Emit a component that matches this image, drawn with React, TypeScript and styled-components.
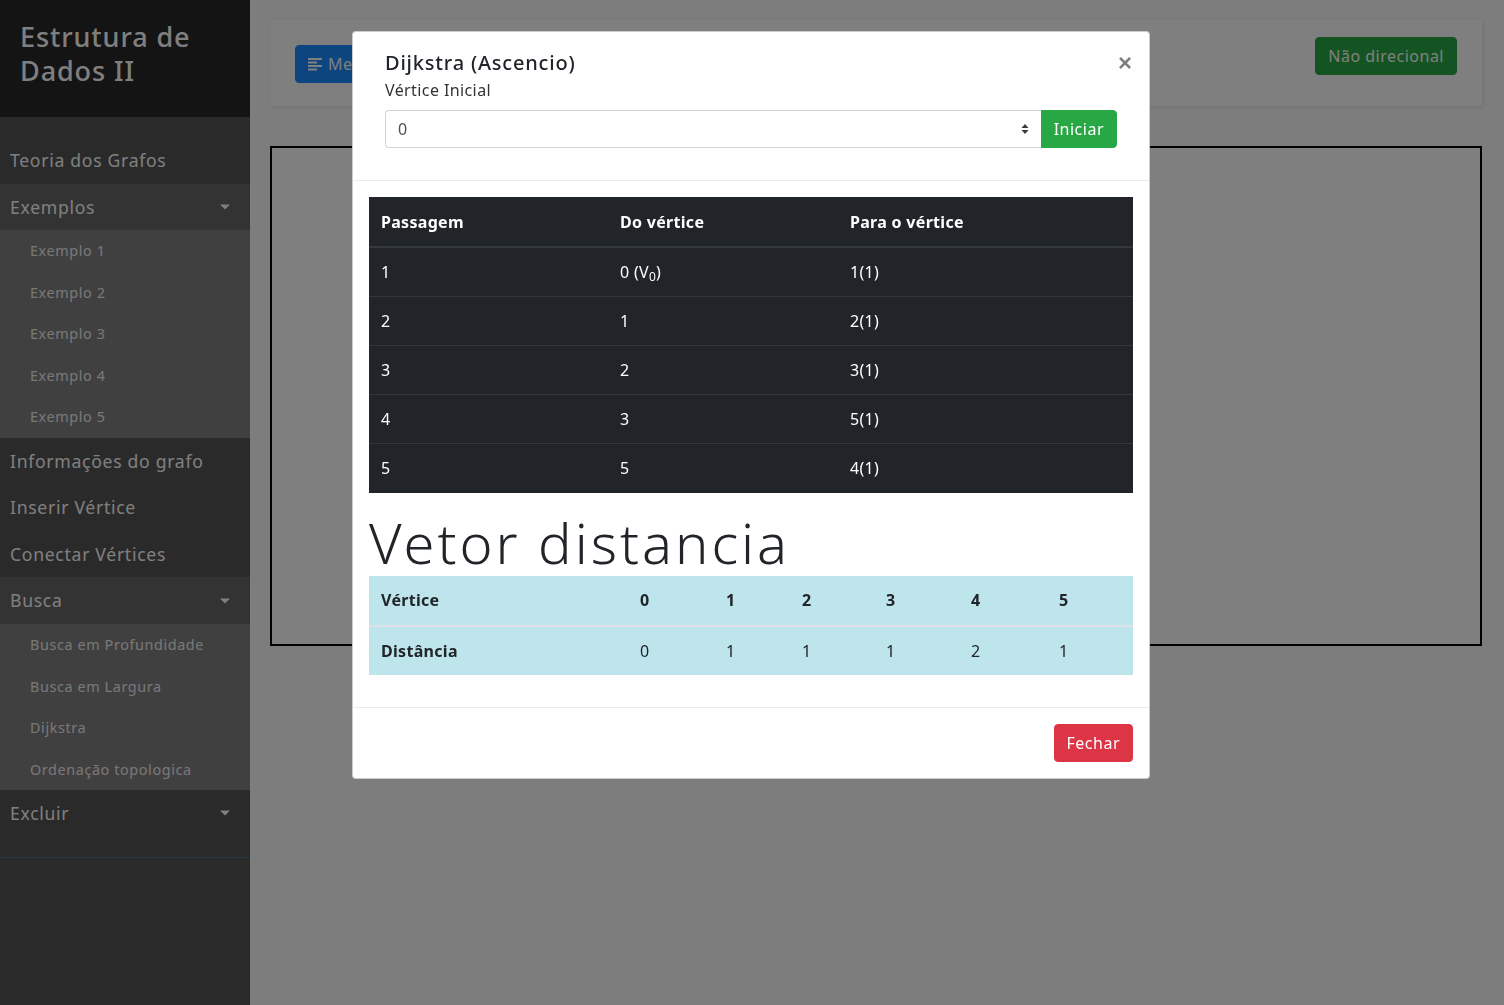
import React from 'react';
import styled, { createGlobalStyle } from 'styled-components';

const FONT = `'Noto Sans', 'Open Sans', sans-serif`;

const GlobalStyle = createGlobalStyle`
  * { box-sizing: border-box; }
  html, body { margin: 0; padding: 0; }
  body {
    font-family: ${FONT};
    background: #fafafa;
    color: #212529;
    overflow: hidden;
  }
`;

const Wrapper = styled.div`
  display: flex;
  min-height: 1005px;
  width: 1504px;
`;

const Sidebar = styled.nav`
  width: 250px;
  flex-shrink: 0;
  background: #545454;
  color: #fff;
`;

const SidebarHeader = styled.div`
  padding: 20px;
  height: 117px;
  background: #282828;
`;

const Brand = styled.h3`
  margin: 0;
  font-size: 27px;
  font-weight: 500;
  line-height: 34px;
  letter-spacing: 0.9px;
`;

const Components = styled.ul`
  list-style: none;
  margin: 0;
  padding: 20px 0;
  border-bottom: 1px solid #47748b;
`;

const NavLink = styled.a<{ $open?: boolean }>`
  position: relative;
  display: block;
  padding: 10px;
  font-size: 17.6px;
  line-height: 26.6px;
  letter-spacing: 0.7px;
  color: #fff;
  background: ${(p) => (p.$open ? '#666666' : 'transparent')};
  text-decoration: none;
`;

const Caret = styled.span`
  position: absolute;
  right: 20px;
  top: 50%;
  transform: translateY(-50%);
  width: 0;
  height: 0;
  border-top: 5px solid #fff;
  border-left: 5px solid transparent;
  border-right: 5px solid transparent;
`;

const SubMenu = styled.ul`
  list-style: none;
  margin: 0;
  padding: 0;
  background: #808080;
`;

const SubLink = styled.a`
  display: block;
  padding: 10px 10px 10px 30px;
  font-size: 14.4px;
  line-height: 21.5px;
  letter-spacing: 0.6px;
  color: #f0f0f0;
  text-decoration: none;
`;

const Content = styled.main`
  flex: 1;
  padding: 20px 22px 20px 20px;
`;

const TopBar = styled.div`
  display: flex;
  justify-content: space-between;
  align-items: flex-start;
  height: 86px;
  padding: 15px 25px;
  background: #fff;
  box-shadow: 1px 1px 3px rgba(0, 0, 0, 0.1);
  margin-bottom: 40px;
`;

const Button = styled.button<{ $bg: string; $offset?: number }>`
  display: inline-flex;
  align-items: center;
  gap: 6px;
  height: 38px;
  padding: 0 12px;
  margin-top: ${(p) => p.$offset ?? 0}px;
  border: 1px solid ${(p) => p.$bg};
  border-radius: 4px;
  background: ${(p) => p.$bg};
  color: #fff;
  font-family: ${FONT};
  font-size: 16px;
  letter-spacing: 0.5px;
  cursor: pointer;
`;

const GraphBox = styled.div`
  height: 500px;
  border: 2px solid #000;
  background: #fff;
`;

const Backdrop = styled.div`
  position: fixed;
  inset: 0;
  background: rgba(0, 0, 0, 0.5);
`;

const Modal = styled.div`
  position: fixed;
  top: 31px;
  left: 352px;
  width: 798px;
  background: #fff;
  border: 1px solid rgba(0, 0, 0, 0.2);
  border-radius: 4px;
`;

const ModalHeader = styled.div`
  display: flex;
  align-items: flex-start;
  padding: 16px 16px 32px 32px;
  border-bottom: 1px solid #e9ecef;
`;

const HeaderMain = styled.div`
  flex: 1;
`;

const Title = styled.h5`
  margin: 0;
  font-size: 20px;
  font-weight: 500;
  line-height: 30px;
  letter-spacing: 0.8px;
`;

const Label = styled.label`
  display: block;
  font-size: 16px;
  line-height: 24px;
  letter-spacing: 0.4px;
  margin-bottom: 8px;
  color: #333;
`;

const InputGroup = styled.div`
  display: flex;
  height: 38px;
`;

const Select = styled.div`
  flex: 1;
  display: flex;
  align-items: center;
  justify-content: space-between;
  padding: 0 12px;
  border: 1px solid #ced4da;
  border-right: none;
  border-radius: 4px 0 0 4px;
  font-size: 16px;
  color: #495057;
`;

const AddonButton = styled(Button)`
  border-radius: 0 4px 4px 0;
  padding: 0 12px;
`;

const Close = styled.button`
  width: 16px;
  margin-top: 4px;
  padding: 0;
  border: none;
  background: none;
  color: #000;
  opacity: 0.5;
  font-size: 24px;
  font-weight: 700;
  line-height: 22px;
  cursor: pointer;
`;

const ModalBody = styled.div`
  padding: 16px;
`;

const Table = styled.table<{ $dark?: boolean }>`
  width: 100%;
  border-collapse: collapse;
  table-layout: fixed;
  margin-bottom: ${(p) => (p.$dark ? 0 : 16)}px;
  background: ${(p) => (p.$dark ? '#212529' : '#bee5eb')};
  color: ${(p) => (p.$dark ? '#fff' : '#212529')};
  font-size: 16px;
  letter-spacing: 0.3px;

  th, td {
    padding: 12px;
    text-align: left;
    line-height: 24px;
    height: 49px;
  }
  th { font-weight: 700; }
  thead th {
    height: 50px;
    border-bottom: 2px solid ${(p) => (p.$dark ? '#32383e' : '#dee2e6')};
  }
  tbody tr + tr td {
    border-top: 1px solid ${(p) => (p.$dark ? '#32383e' : '#dee2e6')};
  }
`;

const Cell = styled.td<{ $bold?: boolean }>`
  font-weight: ${(p) => (p.$bold ? 700 : 400)};
`;

const Sub = styled.sub`
  font-size: 12px;
  line-height: 0;
  vertical-align: -3px;
`;

const Display = styled.h1`
  margin: 16px 0 0;
  font-size: 56px;
  font-weight: 300;
  line-height: 67px;
  letter-spacing: 3px;
  color: #212529;
`;

const ModalFooter = styled.div`
  display: flex;
  justify-content: flex-end;
  padding: 16px;
  border-top: 1px solid #e9ecef;
`;

const MenuIcon = () => (
  <svg width="14" height="14" viewBox="0 0 14 14" fill="#fff">
    <rect x="0" y="1" width="14" height="2" />
    <rect x="0" y="4.5" width="9" height="2" />
    <rect x="0" y="8" width="14" height="2" />
    <rect x="0" y="11.5" width="9" height="2" />
  </svg>
);

const SelectArrows = () => (
  <svg width="8" height="12" viewBox="0 0 8 12" fill="#343a40">
    <path d="M4 1 L7.5 5 H0.5 Z" />
    <path d="M4 11 L7.5 7 H0.5 Z" />
  </svg>
);

const steps = [
  ['1', <>0 (V<Sub>0</Sub>)</>, '1(1)'],
  ['2', '1', '2(1)'],
  ['3', '2', '3(1)'],
  ['4', '3', '5(1)'],
  ['5', '5', '4(1)'],
];

const distances = [0, 1, 1, 1, 2, 1];
const distWidths = [86, 76, 84, 85, 88, 86];

export default function App() {
  return (
    <>
      <GlobalStyle />
      <Wrapper>
        <Sidebar>
          <SidebarHeader>
            <Brand>Estrutura de Dados II</Brand>
          </SidebarHeader>
          <Components>
            <li><NavLink>Teoria dos Grafos</NavLink></li>
            <li>
              <NavLink $open>Exemplos<Caret /></NavLink>
              <SubMenu>
                {[1, 2, 3, 4, 5].map((n) => (
                  <li key={n}><SubLink>Exemplo {n}</SubLink></li>
                ))}
              </SubMenu>
            </li>
            <li><NavLink>Informações do grafo</NavLink></li>
            <li><NavLink>Inserir Vértice</NavLink></li>
            <li><NavLink>Conectar Vértices</NavLink></li>
            <li>
              <NavLink $open>Busca<Caret /></NavLink>
              <SubMenu>
                {['Busca em Profundidade', 'Busca em Largura', 'Dijkstra', 'Ordenação topologica'].map((s) => (
                  <li key={s}><SubLink>{s}</SubLink></li>
                ))}
              </SubMenu>
            </li>
            <li><NavLink>Excluir<Caret /></NavLink></li>
          </Components>
        </Sidebar>
        <Content>
          <TopBar>
            <Button $bg="#1a8cff" $offset={10}><MenuIcon />Menu</Button>
            <Button $bg="#28a745" $offset={2}>Não direcional</Button>
          </TopBar>
          <GraphBox />
        </Content>
      </Wrapper>
      <Backdrop />
      <Modal>
        <ModalHeader>
          <HeaderMain>
            <Title>Dijkstra (Ascencio)</Title>
            <Label>Vértice Inicial</Label>
            <InputGroup>
              <Select>0<SelectArrows /></Select>
              <AddonButton $bg="#28a745">Iniciar</AddonButton>
            </InputGroup>
          </HeaderMain>
          <Close>×</Close>
        </ModalHeader>
        <ModalBody>
          <Table $dark>
            <thead>
              <tr>
                <th style={{ width: 239 }}>Passagem</th>
                <th style={{ width: 230 }}>Do vértice</th>
                <th>Para o vértice</th>
              </tr>
            </thead>
            <tbody>
              {steps.map((r, i) => (
                <tr key={i}>
                  <td>{r[0]}</td>
                  <td>{r[1]}</td>
                  <td>{r[2]}</td>
                </tr>
              ))}
            </tbody>
          </Table>
          <Display>Vetor distancia</Display>
          <Table>
            <thead>
              <tr>
                <th style={{ width: 259 }}>Vértice</th>
                {distances.map((_, i) => (
                  <th key={i} style={{ width: distWidths[i] }}>{i}</th>
                ))}
              </tr>
            </thead>
            <tbody>
              <tr>
                <Cell $bold>Distância</Cell>
                {distances.map((d, i) => (
                  <Cell key={i}>{d}</Cell>
                ))}
              </tr>
            </tbody>
          </Table>
        </ModalBody>
        <ModalFooter>
          <Button $bg="#dc3545">Fechar</Button>
        </ModalFooter>
      </Modal>
    </>
  );
}
